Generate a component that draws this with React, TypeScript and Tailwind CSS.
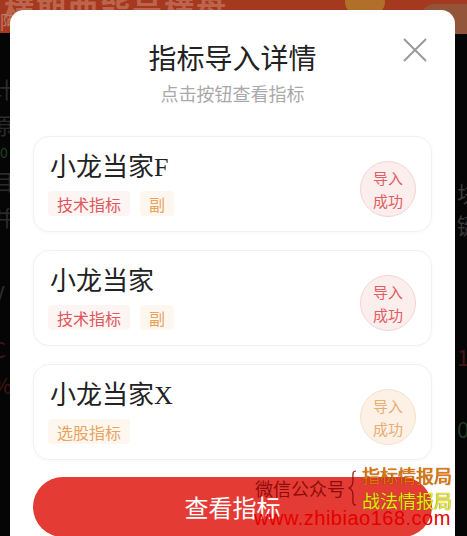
import React from 'react';

interface IndicatorItem {
    name: string;
    tags: { label: string; tone: 'red' | 'orange' }[];
    tone: 'red' | 'orange';
}

const items: IndicatorItem[] = [
    { name: '小龙当家F', tags: [{ label: '技术指标', tone: 'red' }, { label: '副', tone: 'orange' }], tone: 'red' },
    { name: '小龙当家', tags: [{ label: '技术指标', tone: 'red' }, { label: '副', tone: 'orange' }], tone: 'red' },
    { name: '小龙当家X', tags: [{ label: '选股指标', tone: 'orange' }], tone: 'orange' },
];

const cjk = { fontFamily: '"Noto Sans CJK SC", "Noto Sans", sans-serif' };
const titleFont = { fontFamily: '"Liberation Serif", "Noto Sans CJK SC", serif' };

const Tag: React.FC<{ label: string; tone: 'red' | 'orange' }> = ({ label, tone }) => (
    <span
        className={
            tone === 'red'
                ? 'px-[9px] h-[25px] flex items-center rounded-[4px] bg-[#fdf4f4] text-[#e0575a] text-[16px]'
                : 'px-[9px] h-[25px] flex items-center rounded-[4px] bg-[#fdf7f0] text-[#e9a35c] text-[16px]'
        }
    >
        {label}
    </span>
);

const Card: React.FC<{ item: IndicatorItem }> = ({ item }) => (
    <div className="h-[96px] rounded-[16px] border border-[#f1f1f1] bg-white shadow-[0_1px_4px_rgba(0,0,0,0.03)] pl-[16px] pr-[15px] flex items-center">
        <div className="flex-1 pt-[1px]">
            <div className="text-[26px] leading-[30px] text-[#222]" style={titleFont}>{item.name}</div>
            <div className="flex gap-[10px] mt-[8px] ml-[-2px]">
                {item.tags.map((t) => (
                    <Tag key={t.label} label={t.label} tone={t.tone} />
                ))}
            </div>
        </div>
        <div
            className={
                item.tone === 'red'
                    ? 'mt-[10px] w-[56px] h-[56px] rounded-full border border-[#f3d3d4] bg-[#fdeeee] text-[#e05d62] flex flex-col items-center justify-center text-[15px] leading-[23px]'
                    : 'mt-[10px] w-[56px] h-[56px] rounded-full border border-[#f6e1cc] bg-[#fdf1e6] text-[#e9ad76] flex flex-col items-center justify-center text-[15px] leading-[23px]'
            }
        >
            <span>导入</span>
            <span>成功</span>
        </div>
    </div>
);

export default function App() {
    return (
        <div className="relative w-[467px] h-[536px] overflow-hidden bg-[#050505]" style={cjk}>
            {/* page behind the dialog */}
            <div className="absolute inset-x-0 top-0 h-[33px] bg-[#a5391f]">
                <div className="absolute left-[4px] top-[-14px] text-[30px] font-bold text-[#bd654c] tracking-[2px]">横期曲能号横盘</div>
                <div className="absolute left-[0px] top-[8px] text-[18px] text-[#bd7a68]">阿</div>
                <div className="absolute left-[345px] top-[-10px] w-[40px] h-[24px] rounded-full bg-[#b0702a]"></div>
                <div className="absolute left-[420px] top-[4px] w-[60px] h-[30px] rounded-full bg-[#93553a]"></div>
            </div>
            <div className="absolute left-[-8px] top-[70px] flex flex-col text-[22px] leading-[36px] text-[#2c2c2c]">
                <span>计</span>
                <span>原</span>
                <span className="text-[#1f401f] text-[14px] leading-[20px] pl-[8px]">0</span>
                <span>目</span>
                <span>并</span>
                <span className="mt-[40px]">V</span>
                <span className="mt-[20px] text-[#441414]">C</span>
                <span className="text-[#441414]">%</span>
            </div>
            <div className="absolute left-[457px] top-[176px] flex flex-col text-[22px] leading-[32px] text-[#383838]">
                <span>块</span>
                <span>键</span>
                <span className="mt-[100px] text-[#441414]">1</span>
                <span className="mt-[40px] text-[#1f3a1f]">0</span>
            </div>

            {/* dialog */}
            <div className="absolute left-[10px] top-[10px] w-[445px] h-[560px] rounded-[14px] bg-white px-[23px]">
                <div className="relative pt-[29px] text-center">
                    <div className="text-[28px] leading-[36px] text-[#222]">指标导入详情</div>
                    <div className="mt-[6px] text-[18px] leading-[24px] text-[#a9a9a9]">点击按钮查看指标</div>
                    <button className="absolute right-[4px] top-[27px] w-[26px] h-[26px] text-[#9a9a9a]">
                        <svg viewBox="0 0 26 26" className="w-[26px] h-[26px]" fill="none" stroke="currentColor" strokeWidth="2">
                            <path d="M2 2L24 24M24 2L2 24" />
                        </svg>
                    </button>
                </div>

                <div className="mt-[31px] flex flex-col gap-[18px]">
                    {items.map((item) => (
                        <Card key={item.name} item={item} />
                    ))}
                </div>

                <button className="mt-[17px] w-full h-[60px] rounded-full bg-[#e53b35] text-white text-[24px] flex items-center justify-center">
                    查看指标
                </button>
            </div>

            {/* watermark */}
            <div className="absolute left-[255px] top-[463px] flex items-center">
                <span className="text-[18px] leading-[24px] text-[#8e0b0b]">微信公众号</span>
                <svg viewBox="0 0 10 36" className="w-[10px] h-[36px] ml-[3px] mr-[4px]" fill="none" stroke="#8e0b0b" strokeWidth="1.2">
                    <path d="M8 1C4 1 5 4 5 10C5 15 4 17 1 18C4 19 5 21 5 26C5 32 4 35 8 35" />
                </svg>
                <div className="flex flex-col text-[18px] leading-[25px]">
                    <span className="text-[#e57600] [text-shadow:0_0_1px_#5a2a00]">指标情报局</span>
                    <span className="text-[#eaea10] [text-shadow:0_0_1px_#4a4a00]">战法情报局</span>
                </div>
            </div>
            <div
                className="absolute left-[254px] top-[505px] text-[20px] leading-[26px] tracking-[0.5px] text-[#e40000]"
                style={{ fontFamily: '"Liberation Sans", sans-serif' }}
            >
                www.zhibiao168.com
            </div>
        </div>
    );
}
